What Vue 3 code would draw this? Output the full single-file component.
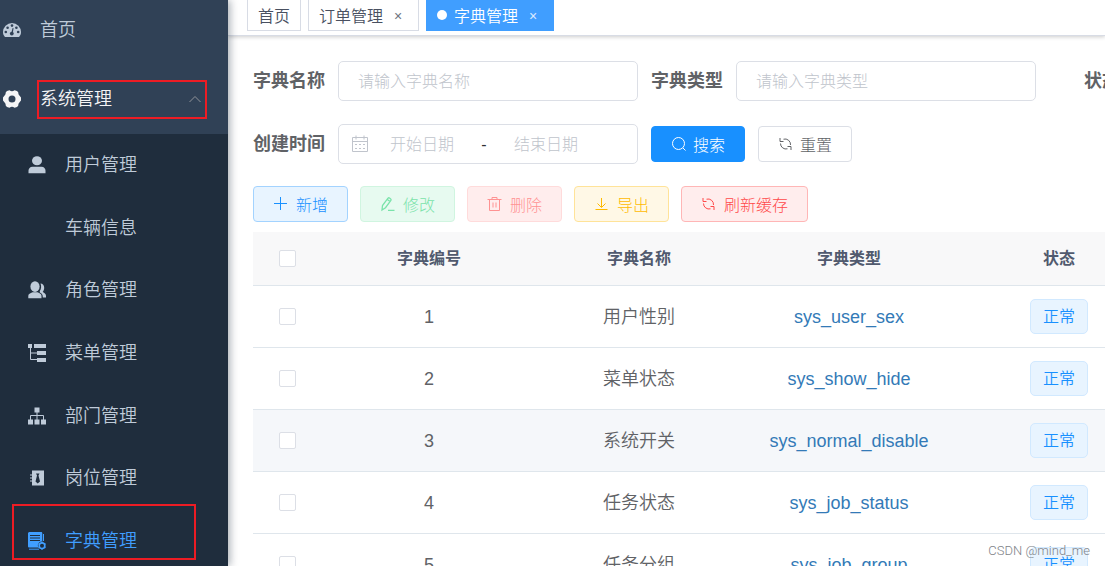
<script setup>
import { ref } from 'vue'

const subMenus = [
  { label: '用户管理', icon: 'user' },
  { label: '车辆信息', icon: '' },
  { label: '角色管理', icon: 'peoples' },
  { label: '菜单管理', icon: 'tree-table' },
  { label: '部门管理', icon: 'tree' },
  { label: '岗位管理', icon: 'post' },
  { label: '字典管理', icon: 'dict', active: true },
]

const tools = [
  { label: '新增', icon: 'plus', type: 'primary' },
  { label: '修改', icon: 'edit', type: 'success', disabled: true },
  { label: '删除', icon: 'delete', type: 'danger', disabled: true },
  { label: '导出', icon: 'download', type: 'warning' },
  { label: '刷新缓存', icon: 'refresh', type: 'danger' },
]

const rows = ref([
  { id: 1, name: '用户性别', type: 'sys_user_sex', checked: false },
  { id: 2, name: '菜单状态', type: 'sys_show_hide', checked: false },
  { id: 3, name: '系统开关', type: 'sys_normal_disable', checked: false, hover: true },
  { id: 4, name: '任务状态', type: 'sys_job_status', checked: false },
  { id: 5, name: '任务分组', type: 'sys_job_group', checked: false },
])

const dictName = ref('')
const dictType = ref('')
const beginDate = ref('')
const endDate = ref('')
</script>

<template>
  <div class="layout">
    <nav class="sidebar">
      <a href="#" class="item home">
        <svg class="icon" viewBox="0 0 18 18">
          <path d="M2 16C.6 14.500 0 13 0 11a9 9 0 0 1 18 0c0 2-.6 3.500-2 5z" fill="currentColor" />
          <g fill="#304156">
            <circle cx="2.800" cy="11" r="1.300" /><circle cx="4.600" cy="6.800" r="1.300" />
            <circle cx="9" cy="4.600" r="1.300" /><circle cx="13.400" cy="6.800" r="1.300" />
            <circle cx="15.200" cy="11" r="1.300" /><circle cx="8.800" cy="12.600" r="1.900" />
            <path d="M8.200 12.500 9.600 7l1 .3-1 5.500z" />
          </g>
        </svg>
        <span>首页</span>
      </a>
      <a href="#" class="item group">
        <svg class="icon" viewBox="0 0 18 18">
          <path fill="currentColor" fill-rule="evenodd" d="M4 1 6.500.3Q9 2 11.500.3L14 1l1.200 1.200q0 2.300 1.200 3.300L18 7.500v3l-1.600 2q-1.200 1-1.200 3.300L14 17l-2.500.7Q9 16 6.500 17.700L4 17l-1.200-1.200q0-2.300-1.200-3.300L0 10.500v-3l1.600-2q1.200-1 1.200-3.300zM9 5.500a3.500 3.500 0 1 0 0 7 3.500 3.500 0 0 0 0-7z" />
        </svg>
        <span>系统管理</span>
        <svg class="arrow" viewBox="0 0 14 14"><path d="M1.500 10 7 4.500l5.500 5.500" fill="none" stroke="currentColor" /></svg>
        <i class="mark mark-group"></i>
      </a>
      <div class="submenu">
        <a v-for="m in subMenus" :key="m.label" href="#" class="sub" :class="{ active: m.active }">
          <svg class="icon" viewBox="0 0 18 18" fill="currentColor">
            <template v-if="m.icon === 'user'">
              <ellipse cx="9" cy="4.700" rx="5" ry="4.500" />
              <path d="M.5 17.200v-2.500c0-2.200 1.500-4 4-4h9c2.500 0 4 1.800 4 4v2.500z" />
            </template>
            <template v-else-if="m.icon === 'peoples'">
              <ellipse cx="7" cy="5.600" rx="4.600" ry="5.300" />
              <path d="M.3 17.300v-2.500c0-1.800 2-2.600 4.200-3.500h5c2.400.9 4 1.700 4 3.500v2.500z" />
              <path d="M12.500 2.500c2.200 0 3.700 1.700 3.700 4.200 0 2-.8 3.300-1.500 4.100.8 1.200 3.300 1.700 3.300 4v1.700h-3.200c0-2.800-1-4-3-4.900v-1.500c1.400-2 1.800-5 .7-7.600z" />
            </template>
            <template v-else-if="m.icon === 'tree-table'">
              <path d="M0 0h4v4H0zM6 0h12v4H6zM9 7h9v4H9zM9 14h9v4H9z" />
              <path d="M2.500 3v12.500H9M2.500 9H9" fill="none" stroke="currentColor" />
            </template>
            <template v-else-if="m.icon === 'tree'">
              <path d="M6.500.5h5v5h-5zM0 12.500h5v5H0zM6.500 12.500h5v5h-5zM13 12.500h5v5h-5z" />
              <path d="M2.500 13V8.500h13V13M9 5v8" fill="none" stroke="currentColor" />
            </template>
            <template v-else-if="m.icon === 'post'">
              <path fill-rule="evenodd" d="M4 1.500h12v15H4zM8 4.500l1 2-1.500 6L9.700 14.500 12 12.500l-1.500-6 1-2z" />
              <path d="M2 6h3M2 9h3M2 12h3" stroke="currentColor" />
            </template>
            <template v-else-if="m.icon === 'dict'">
              <path d="M1 0h12c.8 0 1.300.5 1.300 1.300V9.500a4 4 0 0 0-4 6H1a1 1 0 0 1-1-1V1z" />
              <path d="M2 3.500h10M2 6h10M2 8.500h10" stroke="#1f2d3d" />
              <path d="M15.500 2v7M1 17.200h10" fill="none" stroke="currentColor" />
              <circle cx="14" cy="13.700" r="2.800" fill="none" stroke="currentColor" stroke-width="1.600" />
              <path d="M14 9.700v1.500M14 16.200v1.500M10.500 11.700l1.200.7M16.300 15l1.200.7M17.500 11.700l-1.200.7M11.700 15l-1.200.7" stroke="currentColor" stroke-width="1.500" />
            </template>
          </svg>
          <span>{{ m.label }}</span>
          <i v-if="m.active" class="mark mark-sub"></i>
        </a>
      </div>
    </nav>

    <main class="main">
      <div class="tabs">
        <a href="#" class="tab">首页</a>
        <a href="#" class="tab closable">订单管理<span class="close">×</span></a>
        <a href="#" class="tab closable current"><i class="dot"></i>字典管理<span class="close">×</span></a>
      </div>

      <div class="content">
        <form class="form" @submit.prevent>
          <div class="line">
            <div class="field">
              <label for="dict-name">字典名称</label>
              <input id="dict-name" v-model="dictName" class="box" type="text" placeholder="请输入字典名称">
            </div>
            <div class="field">
              <label for="dict-type">字典类型</label>
              <input id="dict-type" v-model="dictType" class="box" type="text" placeholder="请输入字典类型">
            </div>
            <div class="field">
              <label for="dict-status">状态</label>
              <select id="dict-status" class="box"><option>字典状态</option></select>
            </div>
          </div>
          <div class="line">
            <div class="field">
              <label for="begin">创建时间</label>
              <div class="box range">
                <svg class="cal" viewBox="0 0 18 18" fill="none" stroke="currentColor">
                  <path d="M1.500 2.500h15v14h-15zM1.500 6.500h15M5 .5v4M13 .5v4" />
                  <path d="M4 9.500h2M8 9.500h2M12 9.500h2M4 13.500h2M8 13.500h2M12 13.500h2" />
                </svg>
                <input id="begin" v-model="beginDate" type="text" placeholder="开始日期">
                <span class="sep">-</span>
                <input v-model="endDate" type="text" placeholder="结束日期" aria-label="结束日期">
              </div>
            </div>
            <div class="actions">
              <button type="submit" class="btn solid">
                <svg viewBox="0 0 16 16" fill="none" stroke="currentColor"><circle cx="7.500" cy="7.500" r="6" /><path d="m12 12 2.500 2.500" /></svg>
                搜索
              </button>
              <button type="reset" class="btn plain">
                <svg viewBox="0 0 16 16" fill="none" stroke="currentColor"><path d="M2 2v3.500h3.500M5.500 3.200A5.500 5.500 0 0 1 12.500 9M13 14v-3.500H9.500M9.500 12.800A5.500 5.500 0 0 1 2.500 7.500" /></svg>
                重置
              </button>
            </div>
          </div>
        </form>

        <div class="toolbar">
          <button v-for="t in tools" :key="t.label" type="button" class="btn tool" :class="t.type" :disabled="t.disabled">
            <svg viewBox="0 0 16 16" fill="none" stroke="currentColor">
              <path v-if="t.icon === 'plus'" d="M7.500 1v13M1 7.500h13" />
              <path v-else-if="t.icon === 'edit'" stroke-width="1.300" d="M2 14 2.500 9.500 8 2.200q.7-.7 1.500-.2l1.200.9q.8.700.2 1.500L5.500 11.700zM7.300 3.500l2.800 2M8 14.300h6.500" />
              <path v-else-if="t.icon === 'delete'" d="M.5 3.500h14M5 3.500v-2h5v2M2.500 3.500v11h10v-11M6 6.500v5M9 6.500v5" />
              <path v-else-if="t.icon === 'download'" d="M7.500 2v9M3.500 7.500l4 4 4-4M1.500 13.500h12" />
              <path v-else d="M2 2v3.500h3.500M5.500 3.200A5.500 5.500 0 0 1 12.500 9M13 14v-3.500H9.500M9.500 12.800A5.500 5.500 0 0 1 2.500 7.500" />
            </svg>
            {{ t.label }}
          </button>
        </div>

        <table class="table">
          <colgroup><col class="check-col"><col><col><col><col></colgroup>
          <thead>
            <tr>
              <th><input type="checkbox" aria-label="全选"></th>
              <th>字典编号</th>
              <th>字典名称</th>
              <th>字典类型</th>
              <th>状态</th>
            </tr>
          </thead>
          <tbody>
            <tr v-for="r in rows" :key="r.id" :class="{ hover: r.hover }">
              <td><input v-model="r.checked" type="checkbox" :aria-label="r.name"></td>
              <td>{{ r.id }}</td>
              <td>{{ r.name }}</td>
              <td><a href="#">{{ r.type }}</a></td>
              <td><span class="tag">正常</span></td>
            </tr>
          </tbody>
        </table>
      </div>
    </main>
    <div class="watermark">CSDN @mind_me</div>
  </div>
</template>

<style>
body {
  overflow: hidden;
}
</style>

<style scoped>
.layout {
  position: relative;
  display: flex;
  height: 100vh;
  overflow: hidden;
  background: #fff;
  color: #606266;
  font-family: "Liberation Sans", "Noto Sans CJK SC", sans-serif;
  font-size: 18px;
  font-weight: 350;
}
.layout * {
  box-sizing: border-box;
}
a {
  text-decoration: none;
}
input,
select,
button {
  font: inherit;
}

.sidebar {
  position: relative;
  z-index: 1;
  flex: none;
  width: 228px;
  background: #304156;
  box-shadow: 2px 0 8px rgba(0, 21, 41, 0.35);
  line-height: 24px;
}
.item,
.sub {
  position: relative;
  display: flex;
  align-items: center;
  color: #bfcbd9;
}
.item {
  gap: 19px;
  height: 70px;
  padding: 0 26px 0 3px;
}
.home {
  height: 60px;
  margin-bottom: 4px;
}
.group {
  color: #f4f4f5;
}
.icon {
  flex: none;
  width: 18px;
  height: 18px;
}
.arrow {
  width: 14px;
  height: 14px;
  margin-left: auto;
  color: #909399;
}
.submenu {
  display: flex;
  flex-direction: column;
  height: 438px;
  background: #1f2d3d;
}
.sub {
  flex: 1;
  gap: 19px;
  padding-left: 28px;
}
.sub.active {
  color: #409eff;
}
.mark {
  position: absolute;
  border: 2px solid #ed1c24;
}
.mark-group {
  inset: 16px 21px 15px 37px;
}
.mark-sub {
  inset: -5px 32px 12px 12px;
}

.main {
  flex: 1;
  min-width: 0;
  overflow: hidden;
}
.tabs {
  display: flex;
  gap: 7px;
  height: 36px;
  padding-left: 19px;
  border-bottom: 1px solid #d8dce5;
  box-shadow: 0 1px 4px rgba(0, 0, 0, 0.2);
  font-size: 16px;
}
.tab {
  display: flex;
  align-items: center;
  height: 31px;
  padding: 0 10px;
  border: 1px solid #d8dce5;
  border-top: 0;
  color: #495060;
}
.closable {
  padding-right: 15px;
}
.close {
  width: 10px;
  margin-left: 10px;
  padding-top: 2px;
  font-size: 14px;
  text-align: center;
  opacity: 0.8;
}
.current {
  border-color: #409eff;
  background: #409eff;
  color: #fff;
}
.dot {
  width: 10px;
  height: 10px;
  margin-right: 7px;
  border-radius: 50%;
  background: #fff;
}

.content {
  padding: 25px 0 0 25px;
}
.form {
  display: flex;
  flex-direction: column;
  gap: 23px;
}
.line {
  display: flex;
  gap: 13px;
}
.field {
  display: flex;
  flex: none;
  align-items: center;
}
.field label {
  width: 85px;
  padding-right: 14px;
  font-weight: 700;
  line-height: 24px;
  text-align: right;
  white-space: nowrap;
}
.box {
  width: 300px;
  height: 40px;
  padding: 2px 19px 0;
  border: 1px solid #dcdfe6;
  border-radius: 5px;
  outline: 0;
  background: #fff;
  color: #606266;
  font-size: 16px;
  font-weight: 300;
}
input::placeholder {
  color: #c0c4cc;
  opacity: 1;
}
.range {
  display: flex;
  align-items: center;
  padding: 0 12px;
}
.range input {
  width: 106px;
  padding: 2px 0 0;
  border: 0;
  outline: 0;
  background: none;
  text-align: center;
}
.cal {
  flex: none;
  width: 18px;
  height: 18px;
  color: #c0c4cc;
}
.sep {
  width: 18px;
  padding-top: 2px;
  color: #303133;
  text-align: center;
}
.actions {
  display: flex;
  align-items: center;
  gap: 13px;
}
.btn {
  display: flex;
  align-items: center;
  gap: 6px;
  height: 36px;
  padding: 0 19px;
  border: 1px solid;
  border-radius: 4px;
  font-size: 16px;
  font-weight: 300;
  white-space: nowrap;
}
.btn svg {
  width: 16px;
  height: 16px;
}
.tool {
  gap: 7px;
}
.solid {
  border-color: #1890ff;
  background: #1890ff;
  color: #fff;
}
.plain {
  border-color: #dcdfe6;
  background: #fff;
  color: #606266;
}
.toolbar {
  display: flex;
  gap: 12px;
  margin: 22px 0 10px;
}
.primary {
  border-color: #a3d3ff;
  background: #e8f4ff;
  color: #1890ff;
}
.success {
  border-color: #d0f5e0;
  background: #e7faf0;
  color: #7ae3aa;
}
.warning {
  border-color: #ffe399;
  background: #fff8e6;
  color: #ffba00;
}
.danger {
  border-color: #ffb6b6;
  background: #ffeded;
  color: #ff4949;
}
.danger:disabled {
  border-color: #ffdbdb;
  color: #ff9292;
}

.table {
  width: 100%;
  min-width: 910px;
  border-spacing: 0;
  table-layout: fixed;
  line-height: 24px;
}
.check-col {
  width: 70px;
}
th,
td {
  padding: 0 0 0 2px;
  border-bottom: 1px solid #dfe6ec;
  text-align: center;
}
th:first-child,
td:first-child {
  padding: 0 2px 0 0;
}
th {
  height: 54px;
  background: #f8f8f9;
  color: #515a6e;
  font-size: 16px;
  font-weight: 700;
}
td {
  height: 62px;
}
td a {
  color: #337ab7;
}
.hover {
  background: #f5f7fa;
}
input[type="checkbox"] {
  display: block;
  width: 17px;
  height: 17px;
  margin: 0 auto;
  border: 1px solid #dcdfe6;
  border-radius: 2px;
  appearance: none;
  background: #fff;
}
.tag {
  display: inline-block;
  height: 35px;
  padding: 0 12px;
  border: 1px solid #d1e9ff;
  border-radius: 5px;
  background: #e8f4ff;
  color: #1890ff;
  font-size: 16px;
  line-height: 33px;
  vertical-align: middle;
}
.watermark {
  position: absolute;
  right: 15px;
  bottom: 8px;
  z-index: 2;
  color: #808388;
  font-family: Roboto, sans-serif;
  font-size: 13px;
  font-weight: 300;
}
</style>
